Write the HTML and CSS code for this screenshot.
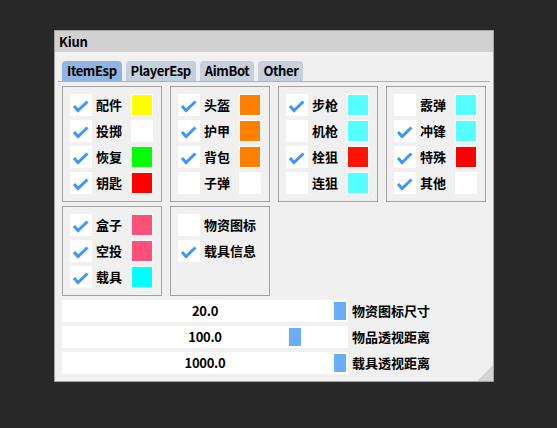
FILE: index.html
```html
<!DOCTYPE html>
<html lang="zh">
<head>
<meta charset="utf-8">
<title>Kiun</title>
<link rel="stylesheet" href="styles.css">
</head>
<body>
<div class="window">
  <div class="titlebar">Kiun</div>
  <div class="content">
    <div class="tabbar">
      <div class="tab active">ItemEsp</div>
      <div class="tab">PlayerEsp</div>
      <div class="tab">AimBot</div>
      <div class="tab">Other</div>
    </div>
    <div class="groups">
      <div class="group">
        <div class="row"><span class="cb on"><svg viewBox="0 0 22 22"><polyline points="4,12 8,16.5 17.5,7.5"/></svg></span><span class="lbl">配件</span><span class="sw" style="background:#ffff00"></span></div>
        <div class="row"><span class="cb on"><svg viewBox="0 0 22 22"><polyline points="4,12 8,16.5 17.5,7.5"/></svg></span><span class="lbl">投掷</span><span class="sw white"></span></div>
        <div class="row"><span class="cb on"><svg viewBox="0 0 22 22"><polyline points="4,12 8,16.5 17.5,7.5"/></svg></span><span class="lbl">恢复</span><span class="sw" style="background:#00ff00"></span></div>
        <div class="row"><span class="cb on"><svg viewBox="0 0 22 22"><polyline points="4,12 8,16.5 17.5,7.5"/></svg></span><span class="lbl">钥匙</span><span class="sw" style="background:#ff0000"></span></div>
      </div>
      <div class="group">
        <div class="row"><span class="cb on"><svg viewBox="0 0 22 22"><polyline points="4,12 8,16.5 17.5,7.5"/></svg></span><span class="lbl">头盔</span><span class="sw" style="background:#ff8000"></span></div>
        <div class="row"><span class="cb on"><svg viewBox="0 0 22 22"><polyline points="4,12 8,16.5 17.5,7.5"/></svg></span><span class="lbl">护甲</span><span class="sw" style="background:#ff8000"></span></div>
        <div class="row"><span class="cb on"><svg viewBox="0 0 22 22"><polyline points="4,12 8,16.5 17.5,7.5"/></svg></span><span class="lbl">背包</span><span class="sw" style="background:#ff8000"></span></div>
        <div class="row"><span class="cb"></span><span class="lbl">子弹</span><span class="sw white"></span></div>
      </div>
      <div class="group">
        <div class="row"><span class="cb on"><svg viewBox="0 0 22 22"><polyline points="4,12 8,16.5 17.5,7.5"/></svg></span><span class="lbl">步枪</span><span class="sw" style="background:#55ffff"></span></div>
        <div class="row"><span class="cb"></span><span class="lbl">机枪</span><span class="sw" style="background:#55ffff"></span></div>
        <div class="row"><span class="cb on"><svg viewBox="0 0 22 22"><polyline points="4,12 8,16.5 17.5,7.5"/></svg></span><span class="lbl">栓狙</span><span class="sw" style="background:#ff1400"></span></div>
        <div class="row"><span class="cb"></span><span class="lbl">连狙</span><span class="sw" style="background:#55ffff"></span></div>
      </div>
      <div class="group">
        <div class="row"><span class="cb"></span><span class="lbl">霰弹</span><span class="sw" style="background:#55ffff"></span></div>
        <div class="row"><span class="cb on"><svg viewBox="0 0 22 22"><polyline points="4,12 8,16.5 17.5,7.5"/></svg></span><span class="lbl">冲锋</span><span class="sw" style="background:#55ffff"></span></div>
        <div class="row"><span class="cb on"><svg viewBox="0 0 22 22"><polyline points="4,12 8,16.5 17.5,7.5"/></svg></span><span class="lbl">特殊</span><span class="sw" style="background:#ff0000"></span></div>
        <div class="row"><span class="cb on"><svg viewBox="0 0 22 22"><polyline points="4,12 8,16.5 17.5,7.5"/></svg></span><span class="lbl">其他</span><span class="sw white"></span></div>
      </div>
      <div class="group">
        <div class="row"><span class="cb on"><svg viewBox="0 0 22 22"><polyline points="4,12 8,16.5 17.5,7.5"/></svg></span><span class="lbl">盒子</span><span class="sw" style="background:#ff4f7b"></span></div>
        <div class="row"><span class="cb on"><svg viewBox="0 0 22 22"><polyline points="4,12 8,16.5 17.5,7.5"/></svg></span><span class="lbl">空投</span><span class="sw" style="background:#ff4f7b"></span></div>
        <div class="row"><span class="cb on"><svg viewBox="0 0 22 22"><polyline points="4,12 8,16.5 17.5,7.5"/></svg></span><span class="lbl">载具</span><span class="sw" style="background:#00ffff"></span></div>
      </div>
      <div class="group">
        <div class="row"><span class="cb"></span><span class="lbl">物资图标</span></div>
        <div class="row"><span class="cb on"><svg viewBox="0 0 22 22"><polyline points="4,12 8,16.5 17.5,7.5"/></svg></span><span class="lbl">载具信息</span></div>
      </div>
    </div>
    <div class="sliders">
      <div class="srow"><div class="slider"><span class="sval">20.0</span><span class="grab" style="left:272px"></span></div><span class="slbl">物资图标尺寸</span></div>
      <div class="srow"><div class="slider"><span class="sval">100.0</span><span class="grab" style="left:227px"></span></div><span class="slbl">物品透视距离</span></div>
      <div class="srow"><div class="slider"><span class="sval">1000.0</span><span class="grab" style="left:272px"></span></div><span class="slbl">载具透视距离</span></div>
    </div>
  </div>
  <div class="grip"></div>
</div>
</body>
</html>
```

FILE: styles.css
```css
html, body {
  margin: 0;
  padding: 0;
  background: #292929;
  width: 557px;
  height: 428px;
  overflow: hidden;
}
body {
  font-family: "Noto Sans CJK SC", "Noto Sans", sans-serif;
  font-weight: 700;
  font-size: 13px;
  color: #000;
}
.window {
  position: absolute;
  left: 54px;
  top: 30px;
  width: 438px;
  height: 350px;
  border: 1px solid #a3a3a3;
  background: #f0f0f0;
  box-sizing: content-box;
}
.titlebar {
  height: 21px;
  line-height: 21px;
  background: #d1d1d1;
  padding-left: 4px;
  font-size: 13px;
  letter-spacing: -0.2px;
}
.content {
  padding: 9px 7px 0 7px;
}
.tabbar {
  display: flex;
  gap: 4px;
  margin: 0 -4px;
  padding: 0 4px;
  border-bottom: 1px solid #91b5e3;
  height: 20px;
}
.tab {
  height: 20px;
  line-height: 20px;
  padding: 0 5px 0 5px;
  background: #c6d0dc;
  border-radius: 4px 4px 0 0;
  font-size: 13px;
  letter-spacing: -0.4px;
}
.tab.active {
  background: #91b5e3;
}
.groups {
  margin-top: 4px;
  display: grid;
  grid-template-columns: repeat(4, 100px);
  column-gap: 8px;
  row-gap: 4px;
}
.group {
  border: 1px solid #a3a3a3;
  padding: 7px 0 7px 7px;
  display: flex;
  flex-direction: column;
  gap: 4px;
}
.row {
  display: flex;
  align-items: center;
  height: 22px;
}
.cb {
  width: 22px;
  height: 22px;
  background: #fff;
  flex: none;
  display: block;
}
.cb svg {
  display: block;
  width: 22px;
  height: 22px;
}
.cb polyline {
  fill: none;
  stroke: #4296fa;
  stroke-width: 3;
  stroke-linecap: butt;
  stroke-linejoin: miter;
}
.lbl {
  margin-left: 4px;
  line-height: 22px;
  white-space: nowrap;
}
.sw {
  margin-left: auto;
  margin-right: 8px;
  width: 20px;
  height: 20px;
  border: 1px solid #fff;
  flex: none;
}
.sw.white {
  background: #fff;
}
.sliders {
  margin-top: 4px;
  display: flex;
  flex-direction: column;
  gap: 4px;
}
.srow {
  display: flex;
  align-items: center;
  height: 22px;
}
.slider {
  position: relative;
  width: 286px;
  height: 22px;
  background: #fff;
  text-align: center;
  line-height: 22px;
  flex: none;
  letter-spacing: -0.3px;
}
.grab {
  position: absolute;
  top: 2px;
  width: 12px;
  height: 18px;
  background: #6badfb;
}
.slbl {
  margin-left: 4px;
  line-height: 22px;
}
.grip {
  position: absolute;
  right: 0;
  bottom: 0;
  width: 0;
  height: 0;
  border-style: solid;
  border-width: 0 0 16px 16px;
  border-color: transparent transparent #d3d3d3 transparent;
}
```
